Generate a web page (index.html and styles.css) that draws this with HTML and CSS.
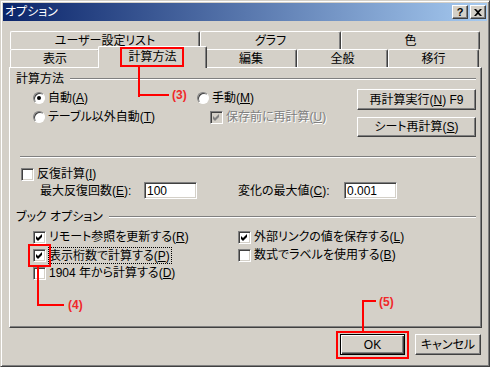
FILE: index.html
```html
<!DOCTYPE html>
<html lang="ja">

<head>
    <meta charset="UTF-8">
    <title>オプション</title>
    <link rel="stylesheet" href="styles.css">
</head>

<body>
    <div class="window">
        <div class="titlebar">
            <span class="title">オプション</span>
            <div class="tbtns">
                <span class="tbtn help">?</span>
                <span class="tbtn">
                    <svg width="8" height="7" viewBox="0 0 8 7"><path d="M0 0h2l2 2l2-2h2l-3 3.5l3 3.5h-2l-2-2l-2 2h-2l3-3.5z" fill="#000"/></svg>
                </span>
            </div>
        </div>

        <div class="client">
            <div class="tabs">
                <div class="tabrow">
                    <div class="tab" style="width: 190px;">ユーザー設定リスト</div>
                    <div class="tab" style="width: 141px;">グラフ</div>
                    <div class="tab" style="width: 139px;">色</div>
                </div>
                <div class="tabrow">
                    <div class="tab" style="width: 90px;">表示</div>
                    <div class="tab active" style="width: 109px;">計算方法</div>
                    <div class="tab" style="width: 92px;">編集</div>
                    <div class="tab" style="width: 91px;">全般</div>
                    <div class="tab" style="width: 91px;">移行</div>
                </div>
            </div>

            <div class="panel">
                <div class="ghead"><span>計算方法</span><span class="gline"></span></div>
                <div class="calc">
                    <div class="opts">
                        <div class="optrow">
                            <label class="item"><span class="radio on"></span><span>自動(<u>A</u>)</span></label>
                            <label class="item"><span class="radio"></span><span>手動(<u>M</u>)</span></label>
                        </div>
                        <div class="optrow second">
                            <label class="item"><span class="radio"></span><span>テーブル以外自動(<u>T</u>)</span></label>
                            <label class="item disabled indent"><span class="chk off"><svg viewBox="0 0 11 11"><polygon points="2,4 4,6 8,2 8,5 4,9 2,7"/></svg></span><span>保存前に再計算(<u>U</u>)</span></label>
                        </div>
                    </div>
                    <div class="btncol">
                        <div class="btn tall"><span>再計算実行(<u>N</u>) F9</span></div>
                        <div class="btn"><span>シート再計算(<u>S</u>)</span></div>
                    </div>
                </div>

                <div class="sep"></div>

                <label class="item iter"><span class="chk"></span><span>反復計算(<u>I</u>)</span></label>
                <div class="maxrow">
                    <span class="flabel">最大反復回数(<u>E</u>):</span>
                    <input type="text" class="field" value="100" readonly>
                    <span class="flabel second">変化の最大値(<u>C</u>):</span>
                    <input type="text" class="field" value="0.001" readonly>
                </div>

                <div class="ghead book"><span>ブック オプション</span><span class="gline"></span></div>
                <div class="bookgrid">
                    <label class="item"><span class="chk"><svg viewBox="0 0 11 11"><polygon points="2,4 4,6 8,2 8,5 4,9 2,7"/></svg></span><span>リモート参照を更新する(<u>R</u>)</span></label>
                    <label class="item"><span class="chk"><svg viewBox="0 0 11 11"><polygon points="2,4 4,6 8,2 8,5 4,9 2,7"/></svg></span><span>外部リンクの値を保存する(<u>L</u>)</span></label>
                    <label class="item"><span class="chk"><svg viewBox="0 0 11 11"><polygon points="2,4 4,6 8,2 8,5 4,9 2,7"/></svg></span><span class="focus">表示桁数で計算する(<u>P</u>)</span></label>
                    <label class="item"><span class="chk"></span><span>数式でラベルを使用する(<u>B</u>)</span></label>
                    <label class="item"><span class="chk"></span><span>1904 年から計算する(<u>D</u>)</span></label>
                </div>
            </div>

            <div class="actions">
                <div class="btn default">OK</div>
                <div class="btn cancel">キャンセル</div>
            </div>
        </div>

        <!-- annotations -->
        <div class="mark" style="left: 119px; top: 46px; width: 64px; height: 20px;"></div>
        <div class="rline" style="left: 137px; top: 65px; width: 2px; height: 31px;"></div>
        <div class="rline" style="left: 137px; top: 93px; width: 31px; height: 2px;"></div>
        <div class="note" style="left: 171px; top: 88px;">(3)</div>

        <div class="mark" style="left: 27px; top: 243px; width: 23px; height: 23px;"></div>
        <div class="rline" style="left: 36px; top: 265px; width: 2px; height: 40px;"></div>
        <div class="rline" style="left: 36px; top: 303px; width: 27px; height: 2px;"></div>
        <div class="note" style="left: 67px; top: 298px;">(4)</div>

        <div class="mark" style="left: 335px; top: 330px; width: 73px; height: 28px;"></div>
        <div class="rline" style="left: 361px; top: 299px; width: 2px; height: 32px;"></div>
        <div class="rline" style="left: 361px; top: 299px; width: 14px; height: 2px;"></div>
        <div class="note" style="left: 378px; top: 295px;">(5)</div>
    </div>
</body>

</html>
```

FILE: styles.css
```css
body {
    margin: 0;
    font-family: "Liberation Sans", "Noto Sans CJK JP", sans-serif;
    font-size: 12px;
    line-height: 14px;
    font-feature-settings: "palt";
    background-color: #d4d0c8;
    color: #000;
}

.window {
    position: relative;
    width: 490px;
    height: 367px;
    box-sizing: border-box;
    padding: 2px;
    border: 1px solid;
    border-color: #d4d0c8 #404040 #404040 #d4d0c8;
    box-shadow: inset 1px 1px #fff, inset -1px -1px #808080;
    background-color: #d4d0c8;
}

/* title bar */
.titlebar {
    height: 18px;
    display: flex;
    align-items: center;
    justify-content: space-between;
    padding: 0 1px 0 2px;
    background: linear-gradient(to right, #0a246a, #a6caf0);
}

.title {
    color: #fff;
    line-height: 18px;
}

.tbtns {
    display: flex;
    gap: 2px;
}

.tbtn {
    width: 16px;
    height: 14px;
    box-sizing: border-box;
    display: flex;
    align-items: center;
    justify-content: center;
    background-color: #d4d0c8;
    border: 1px solid;
    border-color: #fff #404040 #404040 #fff;
    box-shadow: inset -1px -1px #808080;
}

.tbtn.help {
    font-weight: bold;
    font-size: 11px;
    line-height: 12px;
}

/* tabs */
.client {
    padding: 10px 6px 0 6px;
}

.tabs {
    margin-left: 1px;
}

.tabrow {
    display: flex;
    height: 18px;
}

.tab {
    box-sizing: border-box;
    height: 18px;
    display: flex;
    align-items: center;
    justify-content: center;
    background-color: #d4d0c8;
    border-left: 1px solid #fff;
    border-top: 1px solid #fff;
    border-right: 1px solid #404040;
    border-radius: 2px 2px 0 0;
    box-shadow: inset -1px 0 #808080;
}

.tab.active {
    position: relative;
    z-index: 1;
    height: 22px;
    margin: -3px -2px -1px -2px;
    padding-bottom: 2px;
}

/* page */
.panel {
    width: 473px;
    height: 261px;
    box-sizing: border-box;
    padding: 4px 5px 0 6px;
    border-left: 1px solid #fff;
    border-top: 1px solid #fff;
    border-right: 1px solid #404040;
    border-bottom: 1px solid #404040;
    box-shadow: inset -1px -1px #808080;
}

.ghead {
    display: flex;
    align-items: center;
    gap: 6px;
    height: 14px;
}

.gline {
    flex: 1;
    border-top: 1px solid #808080;
    border-bottom: 1px solid #fff;
}

.ghead.book {
    margin-top: 11px;
}

.calc {
    display: flex;
    margin-top: 3px;
}

.opts {
    flex: 1;
    padding-left: 17px;
}

.optrow {
    display: grid;
    grid-template-columns: 164px auto;
    align-items: center;
    height: 18px;
}

.optrow.second {
    margin-top: 1px;
}

.indent {
    margin-left: 13px;
}

.item {
    display: flex;
    align-items: center;
    gap: 3px;
    white-space: nowrap;
}

.item.disabled {
    color: #808080;
    text-shadow: 1px 1px #fff;
}

.radio {
    width: 12px;
    height: 12px;
    box-sizing: border-box;
    flex: none;
    border-radius: 50%;
    display: flex;
    align-items: center;
    justify-content: center;
    background-color: #fff;
    border: 1px solid;
    border-color: #808080 #fff #fff #808080;
    box-shadow: inset 1px 1px #404040;
}

.radio.on::after {
    content: "";
    width: 4px;
    height: 4px;
    border-radius: 50%;
    background-color: #000;
}

.chk {
    width: 13px;
    height: 13px;
    box-sizing: border-box;
    flex: none;
    display: flex;
    background-color: #fff;
    border: 1px solid;
    border-color: #808080 #fff #fff #808080;
    box-shadow: inset 1px 1px #404040, inset -1px -1px #d4d0c8;
}

.chk svg {
    width: 11px;
    height: 11px;
    fill: #000;
}

.chk.off {
    background-color: #d4d0c8;
}

.chk.off svg {
    fill: #808080;
}

.btncol {
    display: flex;
    flex-direction: column;
    gap: 7px;
    width: 119px;
}

.btn {
    box-sizing: border-box;
    height: 20px;
    display: flex;
    align-items: center;
    justify-content: center;
    background-color: #d4d0c8;
    border: 1px solid;
    border-color: #fff #404040 #404040 #fff;
    box-shadow: inset -1px -1px #808080;
    white-space: nowrap;
}

.btn.tall {
    height: 21px;
}

.sep {
    margin: 19px 0 0 4px;
    border-top: 1px solid #808080;
    border-bottom: 1px solid #fff;
}

.iter {
    height: 16px;
    margin-top: 8px;
    padding-left: 5px;
}

.maxrow {
    display: flex;
    align-items: center;
    height: 17px;
    padding-left: 24px;
}

.flabel {
    width: 104px;
    white-space: nowrap;
}

.flabel.second {
    width: 106px;
    margin-left: 41px;
}

input[type="text"].field {
    width: 53px;
    height: 17px;
    box-sizing: border-box;
    margin: 0;
    padding: 0 2px;
    font-family: "Liberation Sans", "Noto Sans CJK JP", sans-serif;
    font-size: 12px;
    color: #000;
    background-color: #fff;
    border: 1px solid;
    border-color: #808080 #fff #fff #808080;
    box-shadow: inset 1px 1px #404040, inset -1px -1px #d4d0c8;
    outline: none;
}

.bookgrid {
    display: grid;
    grid-template-columns: 205px auto;
    grid-auto-rows: 18px;
    align-items: center;
    margin-top: 4px;
    padding-left: 17px;
}

.focus {
    border: 1px dotted #000;
    padding: 1px 1px 0 0;
    margin-left: -1px;
}

/* dialog buttons */
.actions {
    display: flex;
    justify-content: flex-end;
    gap: 10px;
    margin-top: 6px;
}

.actions .btn {
    height: 21px;
}

.btn.default {
    width: 65px;
    border: 1px solid #000;
    box-shadow: inset 1px 1px #fff, inset -1px -1px #404040, inset -2px -2px #808080;
}

.btn.cancel {
    width: 66px;
}

/* red annotations */
.mark,
.rline,
.note {
    position: absolute;
    z-index: 2;
}

.mark {
    box-sizing: border-box;
    border: 2px solid #ff0000;
}

.rline {
    background-color: #ff0000;
}

.note {
    font-family: "Liberation Sans", Arial, sans-serif;
    font-weight: bold;
    font-size: 12px;
    line-height: 12px;
    color: #f02828;
}
```
